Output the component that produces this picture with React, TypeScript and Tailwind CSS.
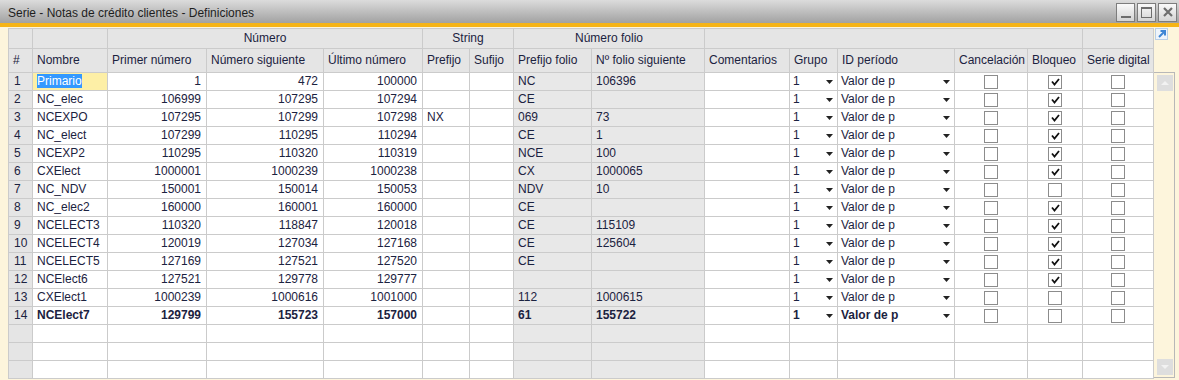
import React from 'react';

type Row = {
  n: number;
  name: string;
  first: string;
  next: string;
  last: string;
  prefix?: string;
  folioPrefix?: string;
  folioNext?: string;
  lock: boolean;
  bold?: boolean;
};

const rows: Row[] = [
  { n: 1, name: 'Primario', first: '1', next: '472', last: '100000', folioPrefix: 'NC', folioNext: '106396', lock: true },
  { n: 2, name: 'NC_elec', first: '106999', next: '107295', last: '107294', folioPrefix: 'CE', lock: true },
  { n: 3, name: 'NCEXPO', first: '107295', next: '107299', last: '107298', prefix: 'NX', folioPrefix: '069', folioNext: '73', lock: true },
  { n: 4, name: 'NC_elect', first: '107299', next: '110295', last: '110294', folioPrefix: 'CE', folioNext: '1', lock: true },
  { n: 5, name: 'NCEXP2', first: '110295', next: '110320', last: '110319', folioPrefix: 'NCE', folioNext: '100', lock: true },
  { n: 6, name: 'CXElect', first: '1000001', next: '1000239', last: '1000238', folioPrefix: 'CX', folioNext: '1000065', lock: true },
  { n: 7, name: 'NC_NDV', first: '150001', next: '150014', last: '150053', folioPrefix: 'NDV', folioNext: '10', lock: false },
  { n: 8, name: 'NC_elec2', first: '160000', next: '160001', last: '160000', folioPrefix: 'CE', lock: true },
  { n: 9, name: 'NCELECT3', first: '110320', next: '118847', last: '120018', folioPrefix: 'CE', folioNext: '115109', lock: true },
  { n: 10, name: 'NCELECT4', first: '120019', next: '127034', last: '127168', folioPrefix: 'CE', folioNext: '125604', lock: true },
  { n: 11, name: 'NCELECT5', first: '127169', next: '127521', last: '127520', folioPrefix: 'CE', lock: true },
  { n: 12, name: 'NCElect6', first: '127521', next: '129778', last: '129777', lock: true },
  { n: 13, name: 'CXElect1', first: '1000239', next: '1000616', last: '1001000', folioPrefix: '112', folioNext: '1000615', lock: false },
  { n: 14, name: 'NCElect7', first: '129799', next: '155723', last: '157000', folioPrefix: '61', folioNext: '155722', lock: false, bold: true },
];

const cell = 'h-[18px] border-r border-b border-[#cbcbcb] leading-[17px] whitespace-nowrap overflow-hidden';
const hcell = 'border-r border-b border-[#cbcbcb] bg-[#e5e5e5] whitespace-nowrap overflow-hidden';

function Check({ on }: { on: boolean }) {
  return (
    <span className="inline-flex w-[14px] h-[14px] border border-[#8c8c8c] bg-white items-center justify-center">
      {on && (
        <svg width="9" height="8" viewBox="0 0 9 8">
          <path d="M1 3.5 L3.5 6.5 L8 1" fill="none" stroke="#111" strokeWidth="1.8" />
        </svg>
      )}
    </span>
  );
}

function Arrow() {
  return (
    <svg width="7" height="4" viewBox="0 0 7 4" className="shrink-0">
      <path d="M0 0 H7 L3.5 4 Z" fill="#222" />
    </svg>
  );
}

function WinButton({ kind }: { kind: 'min' | 'max' | 'close' }) {
  return (
    <div className="w-[19px] h-[19px] border border-[#7d7d7d] bg-gradient-to-b from-[#fafafa] to-[#d4d4d4] flex items-center justify-center">
      {kind === 'min' && <div className="w-[10px] h-[2px] bg-[#6d6d6d] mt-[9px]" />}
      {kind === 'max' && <div className="w-[11px] h-[11px] border border-[#6d6d6d] border-t-2" />}
      {kind === 'close' && (
        <svg width="10" height="10" viewBox="0 0 10 10">
          <path d="M1 1 L9 9 M9 1 L1 9" stroke="#6d6d6d" strokeWidth="2.2" />
        </svg>
      )}
    </div>
  );
}

function DataRow({ r }: { r?: Row }) {
  const b = r?.bold ? 'font-bold' : '';
  return (
    <>
      <div className={`${cell} bg-[#e5e5e5] pl-[5px]`}>{r?.n}</div>
      <div className={`${cell} pl-[4px] ${b} ${r?.n === 1 ? 'bg-[#fdefa6]' : 'bg-white'}`}>
        {r?.n === 1 ? <span className="bg-[#3399ff] text-white">{r.name}</span> : r?.name}
      </div>
      <div className={`${cell} bg-white text-right pr-[5px] ${b}`}>{r?.first}</div>
      <div className={`${cell} bg-white text-right pr-[5px] ${b}`}>{r?.next}</div>
      <div className={`${cell} bg-white text-right pr-[5px] ${b}`}>{r?.last}</div>
      <div className={`${cell} bg-white pl-[4px] ${b}`}>{r?.prefix}</div>
      <div className={`${cell} bg-white`} />
      <div className={`${cell} bg-[#e8e8e8] pl-[4px] ${b}`}>{r?.folioPrefix}</div>
      <div className={`${cell} bg-[#e8e8e8] pl-[4px] ${b}`}>{r?.folioNext}</div>
      <div className={`${cell} bg-white`} />
      <div className={`${cell} bg-white pl-[3px] pr-[4px] flex items-center justify-between ${b}`}>
        {r && (
          <>
            <span>1</span>
            <Arrow />
          </>
        )}
      </div>
      <div className={`${cell} bg-white pl-[3px] pr-[4px] flex items-center justify-between ${b}`}>
        {r && (
          <>
            <span>Valor de p</span>
            <Arrow />
          </>
        )}
      </div>
      <div className={`${cell} bg-white flex items-center justify-center`}>{r && <Check on={false} />}</div>
      <div className={`${cell} bg-white flex items-center justify-center`}>{r && <Check on={r.lock} />}</div>
      <div className={`${cell} bg-white flex items-center justify-center`}>{r && <Check on={false} />}</div>
    </>
  );
}

export default function App() {
  return (
    <div className="w-[1179px] h-[380px] overflow-hidden bg-[#fdf5dc] flex flex-col font-['Liberation_Sans',Arial,sans-serif] text-[12px] text-[#1b2240]">
      <div className="h-[23px] shrink-0 bg-gradient-to-b from-[#dcdcdc] to-[#a2a2a2] flex items-center justify-between pl-[8px] pr-[2px]">
        <span className="text-[#1e1e1e] text-[12px] mt-[3px]">Serie - Notas de crédito clientes - Definiciones</span>
        <div className="flex gap-[2px] mt-[1px]">
          <WinButton kind="min" />
          <WinButton kind="max" />
          <WinButton kind="close" />
        </div>
      </div>
      <div className="h-[4px] shrink-0 bg-[#f6b417]" />

      <div className="flex pt-[1px] pl-[8px]">
        <div className="grid grid-cols-[24px_75px_99px_117px_99px_47px_44px_78px_113px_85px_48px_117px_73px_55px_71px] border-l border-t border-[#cbcbcb]">
          <div className={`${hcell} h-[20px]`} />
          <div className={`${hcell} h-[20px]`} />
          <div className={`${hcell} h-[20px] col-span-3 text-center leading-[18px]`}>Número</div>
          <div className={`${hcell} h-[20px] col-span-2 text-center leading-[18px]`}>String</div>
          <div className={`${hcell} h-[20px] col-span-2 text-center leading-[18px]`}>Número folio</div>
          <div className={`${hcell} h-[20px] col-span-5`} />
          <div className={`${hcell} h-[20px]`} />

          {['#', 'Nombre', 'Primer número', 'Número siguiente', 'Último número', 'Prefijo', 'Sufijo', 'Prefijo folio', 'Nº folio siguiente', 'Comentarios', 'Grupo', 'ID período', 'Cancelación', 'Bloqueo', 'Serie digital'].map((h) => (
            <div key={h} className={`${hcell} h-[24px] leading-[23px] pl-[4px]`}>
              {h}
            </div>
          ))}

          {rows.map((r) => (
            <DataRow key={r.n} r={r} />
          ))}
          <DataRow />
          <DataRow />
          <DataRow />
        </div>

        <div className="w-[26px] flex flex-col">
          <div className="h-[44px] pl-[1px] pt-[0px]">
            <div className="w-[13px] h-[12px] border border-[#b9cfe6] bg-[#eef4fb] flex items-center justify-center">
              <svg width="10" height="10" viewBox="0 0 10 10">
                <path d="M2 8 L8 2 M3.5 2 H8 V6.5" fill="none" stroke="#3f86d4" strokeWidth="2" />
              </svg>
            </div>
          </div>
          <div className="w-[21px] h-[306px] border-t border-r border-b border-[#b8b8b8] flex flex-col justify-between items-center py-[2px] pl-[1px]">
            <div className="w-[16px] h-[16px] bg-[#dedede] flex items-center justify-center">
              <svg width="8" height="4" viewBox="0 0 8 4">
                <path d="M0 4 L4 0 L8 4 Z" fill="#f2f2f2" />
              </svg>
            </div>
            <div className="w-[16px] h-[16px] bg-[#dedede] flex items-center justify-center">
              <svg width="8" height="4" viewBox="0 0 8 4">
                <path d="M0 0 H8 L4 4 Z" fill="#f2f2f2" />
              </svg>
            </div>
          </div>
        </div>
      </div>
    </div>
  );
}
